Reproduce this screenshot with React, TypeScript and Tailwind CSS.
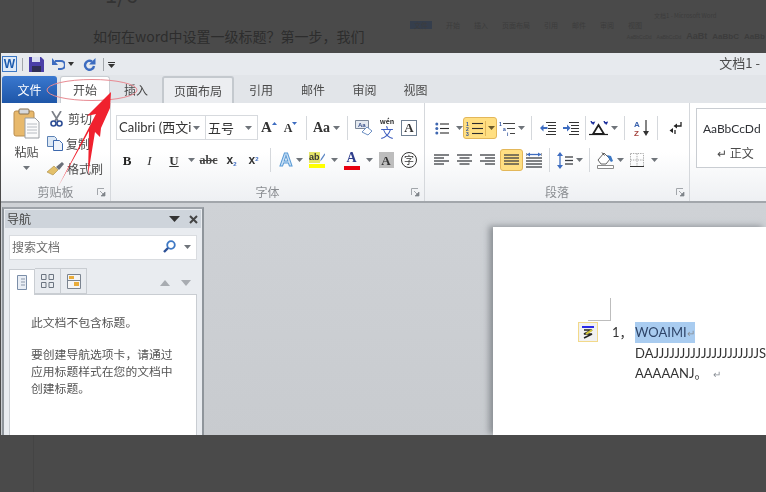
import type { ReactNode } from 'react'

const Caret = ({ className = 'text-[#6f747a]' }: { className?: string }) => (
  <svg width="7" height="4" viewBox="0 0 7 4" className={className}>
    <path d="M0 0h7L3.5 4z" fill="currentColor" />
  </svg>
)

const Sep = () => <div className="mx-auto h-[24px] w-px bg-[#d5d8dc]" />

const Slot = ({ w, children }: { w: number; children?: ReactNode }) => (
  <div className="flex shrink-0 items-center justify-center gap-[3px]" style={{ width: w }}>
    {children}
  </div>
)

const Launcher = () => (
  <svg width="9" height="9" viewBox="0 0 9 9">
    <path d="M0.5 7V0.5H7" fill="none" stroke="#a2a6ab" />
    <path d="M3 3l4 4M8 4v4H4z" fill="#7f8489" stroke="#7f8489" strokeWidth="0.7" />
  </svg>
)

const GroupLabel = ({ children }: { children: string }) => (
  <div className="grid h-[18px] shrink-0 grid-cols-[1fr_auto_1fr] items-center px-[4px] text-[12px] text-[#8a8d91]">
    <span />
    <span>{children}</span>
    <span className="flex justify-end">
      <Launcher />
    </span>
  </div>
)

const Lines = ({ kind }: { kind: 'left' | 'center' | 'right' | 'full' }) => {
  const rows = {
    left: ['M0 1h15', 'M0 4h10', 'M0 7h15', 'M0 10h10'],
    center: ['M0 1h15', 'M2.5 4h10', 'M0 7h15', 'M2.5 10h10'],
    right: ['M0 1h15', 'M5 4h10', 'M0 7h15', 'M5 10h10'],
    full: ['M0 1h15', 'M0 4h15', 'M0 7h15', 'M0 10h15'],
  }[kind]
  return (
    <svg width="15" height="12" viewBox="0 0 15 12">
      {rows.map((d) => (
        <path key={d} d={d} stroke="#3c3f43" strokeWidth="1.3" />
      ))}
    </svg>
  )
}

const Bullets = () => (
  <svg width="14" height="13" viewBox="0 0 14 13">
    {[2, 6.5, 11].map((y) => (
      <g key={y}>
        <circle cx="1.8" cy={y} r="1.5" fill="#3f67b0" />
        <path d={`M5 ${y}h9`} stroke="#2d2d2d" strokeWidth="1.1" />
      </g>
    ))}
  </svg>
)

const Numbered = () => (
  <svg width="17" height="15" viewBox="0 0 17 15">
    {[2.5, 7.5, 12.5].map((y, i) => (
      <g key={y}>
        <text x="0" y={y + 2} fontSize="5" fontWeight="700" fill="#2c4f9c" fontFamily="Liberation Sans">
          {i + 1}
        </text>
        <path d={`M6 ${y}h11`} stroke="#2d2d2d" strokeWidth="1.1" />
      </g>
    ))}
  </svg>
)

const MultiLevel = () => (
  <svg width="16" height="15" viewBox="0 0 16 15">
    <text x="0" y="5" fontSize="5" fontWeight="700" fill="#2c4f9c" fontFamily="Liberation Sans">1</text>
    <text x="4" y="10" fontSize="5" fontWeight="700" fill="#2c4f9c" fontFamily="Liberation Sans">a</text>
    <text x="8" y="15" fontSize="5" fontWeight="700" fill="#2c4f9c" fontFamily="Liberation Sans">i</text>
    <path d="M4 2.5h12M8 7.5h8M11 12.5h5" stroke="#444" strokeWidth="1" />
  </svg>
)

const Indent = ({ flip }: { flip?: boolean }) => (
  <svg width="16" height="15" viewBox="0 0 16 15">
    <path d="M6 2h10M8 5h8M8 8h8M8 11h8M6 14h10" stroke="#333" strokeWidth="1.1" transform="translate(0 -0.5)" />
    {flip ? (
      <path d="M0 6h4V3.5L7.5 7 4 10.5V8H0z" fill="#3d6cc0" />
    ) : (
      <path d="M7.5 6h-4V3.5L0 7l3.5 3.5V8h4z" fill="#3d6cc0" />
    )}
  </svg>
)

const Mixed = () => (
  <svg width="19" height="15" viewBox="0 0 19 15">
    <path d="M9.5 4L4 13h11z" fill="none" stroke="#1f1f1f" strokeWidth="1.8" />
    <path d="M0 13.5h19" stroke="#1f1f1f" strokeWidth="1.2" />
    <path d="M2 0l1 2 2-.5-1 2M15 0l1 2 2-.5-1 2" stroke="#1c2f9c" strokeWidth="1.4" fill="none" />
  </svg>
)

const Sort = () => (
  <svg width="16" height="17" viewBox="0 0 16 17">
    <text x="0" y="7" fontSize="8" fontWeight="700" fill="#3a62ad" fontFamily="Liberation Sans">A</text>
    <text x="0" y="16" fontSize="8" fontWeight="700" fill="#a5453f" fontFamily="Liberation Sans">Z</text>
    <path d="M12 0v14" stroke="#333" strokeWidth="1.2" />
    <path d="M9 11h6l-3 5z" fill="#333" />
  </svg>
)

const Pilcrow = () => (
  <svg width="13" height="14" viewBox="0 0 13 14">
    <path d="M12 1v4H7M6 9v4" stroke="#222" strokeWidth="1.3" fill="none" />
    <path d="M8 2.5v5L4.5 5zM4 7v5L.5 9.5z" fill="#222" />
  </svg>
)

const Distribute = () => (
  <svg width="16" height="17" viewBox="0 0 16 17">
    <path d="M0 1v3M16 1v3" stroke="#444" />
    <path d="M1 2.5h14" stroke="#3d6cc0" strokeWidth="1.3" />
    <path d="M1 2.5l3-2v4zM15 2.5l-3-2v4z" fill="#3d6cc0" />
    {[6, 9, 12, 15].map((y) => (
      <path key={y} d={`M0 ${y}h16`} stroke="#3c3f43" strokeWidth="1.3" />
    ))}
  </svg>
)

const LineSpacing = () => (
  <svg width="16" height="17" viewBox="0 0 16 17">
    <path d="M3 0l3 4H0zM3 17l3-4H0z" fill="#3d6cc0" />
    <path d="M3 4v9" stroke="#3d6cc0" strokeWidth="1.3" />
    {[5, 8.5, 12].map((y) => (
      <path key={y} d={`M8 ${y}h8`} stroke="#3c3f43" strokeWidth="1.3" />
    ))}
  </svg>
)

const Shading = () => (
  <svg width="17" height="18" viewBox="0 0 17 18">
    <path d="M1 9l6-7 6 6-4 5H4z" fill="#fff" stroke="#666" />
    <path d="M5 1.5l2.5 3" stroke="#444" />
    <path d="M10 4l4 1 2 5-2 1-2-3z" fill="#3d78c4" />
    <path d="M0.5 14.5h16v3H.5z" fill="#fff" stroke="#8b8b8b" />
  </svg>
)

const Borders = () => (
  <svg width="14" height="14" viewBox="0 0 14 14">
    <path d="M.5.5h13v13H.5zM7 .5v13M.5 7h13" fill="none" stroke="#aaa" strokeDasharray="1.4 1" />
    <path d="M0 13.5h14" stroke="#333" />
  </svg>
)

const Paste = () => (
  <svg width="27" height="31" viewBox="0 0 27 31">
    <rect x="1" y="3" width="20" height="25" rx="2" fill="#e8b96c" stroke="#b98d4f" />
    <rect x="6" y="1" width="10" height="5" rx="1" fill="#d7d8da" stroke="#86714f" />
    <path d="M12 10h10l4 4v16H12z" fill="#fbfbfb" stroke="#9a9ea3" />
    <path d="M14 16h10M14 19h10M14 22h10M14 25h10" stroke="#b8bcc2" />
  </svg>
)

const Scissors = () => (
  <svg width="13" height="16" viewBox="0 0 13 16">
    <path d="M2 0l6 10M11 0L5 10" stroke="#7c8088" strokeWidth="1.7" />
    <circle cx="3.5" cy="12.5" r="2.5" fill="none" stroke="#2e4e95" strokeWidth="1.6" />
    <circle cx="9.5" cy="12.5" r="2.5" fill="none" stroke="#2e4e95" strokeWidth="1.6" />
  </svg>
)

const CopyIcon = () => (
  <svg width="16" height="15" viewBox="0 0 16 15">
    <path d="M.5.5h7l2 2v8h-9z" fill="#dce8f5" stroke="#5c82b5" />
    <path d="M6.5 4.5h6l3 3v7h-9z" fill="#eef3fa" stroke="#3c68ad" />
  </svg>
)

const Brush = () => (
  <svg width="17" height="15" viewBox="0 0 17 15">
    <path d="M0 11l7-6 4 4-5 5z" fill="#e3c06a" stroke="#a78a3f" strokeWidth="0.6" />
    <path d="M9 6l6-5 2 2-5 6z" fill="#6a6f79" />
  </svg>
)

const WenIcon = () => (
  <div className="flex h-[22px] w-[20px] flex-col items-center">
    <span className="text-[7px] font-bold leading-[8px] text-[#333]">wén</span>
    <span className="text-[13px] leading-[14px] text-[#3f5fc0]">文</span>
  </div>
)

const ClearIcon = () => (
  <svg width="18" height="16" viewBox="0 0 18 16">
    <path d="M.5.5h13v8H.5z" fill="#e4e9f0" stroke="#7b8799" />
    <text x="3" y="7" fontSize="6" fontWeight="700" fill="#39508a" fontFamily="Liberation Sans">Aa</text>
    <path d="M7 12l5-5 5 4-4 4z" fill="#fff" stroke="#6d90c4" />
  </svg>
)

const Letter = ({ children, className }: { children: ReactNode; className: string }) => (
  <span className={`font-['Liberation_Serif',serif] font-bold leading-none ${className}`}>{children}</span>
)

const Combo = ({ w, label, className = '' }: { w: number; label: string; className?: string }) => (
  <div
    className={`flex h-[25px] shrink-0 items-center justify-between overflow-hidden border border-[#d7dade] bg-white pl-[2px] pr-[5px] text-[13px] text-[#333] ${className}`}
    style={{ width: w }}
  >
    <span className="whitespace-nowrap">{label}</span>
    <Caret />
  </div>
)

const FontGroup = () => (
  <div className="flex w-[314px] shrink-0 flex-col border-r border-[#d5d8dc] pt-[12px]">
    <div className="flex h-[25px] items-center pl-[5px]">
      <Combo w={90} label="Calibri (西文i" className="font-['Lato','Noto_Sans_CJK_SC',sans-serif]" />
      <Combo w={53} label="五号" className="-ml-px" />
      <Slot w={22}>
        <Letter className="text-[15px] text-[#333]">A</Letter>
        <svg width="5" height="3" className="mb-[9px] -ml-[3px]"><path d="M0 3L2.5 0 5 3z" fill="#3d6cc0" /></svg>
      </Slot>
      <Slot w={21}>
        <Letter className="text-[12px] text-[#333]">A</Letter>
        <svg width="5" height="3" className="mb-[9px] -ml-[3px]"><path d="M0 0h5L2.500 3z" fill="#3d6cc0" /></svg>
      </Slot>
      <Slot w={10}><Sep /></Slot>
      <Slot w={31}>
        <Letter className="text-[14px] text-[#333]">Aa</Letter>
        <Caret />
      </Slot>
      <Slot w={10}><Sep /></Slot>
      <Slot w={24}><ClearIcon /></Slot>
      <Slot w={22}><WenIcon /></Slot>
      <Slot w={22}>
        <div className="flex h-[16px] w-[16px] items-center justify-center border border-[#6f7f92] bg-white">
          <Letter className="text-[13px] text-[#333]">A</Letter>
        </div>
      </Slot>
    </div>
    <div className="mt-[8px] flex h-[24px] items-center pl-[5px]">
      <Slot w={22}><Letter className="text-[13px] text-[#222]">B</Letter></Slot>
      <Slot w={23}><Letter className="text-[13px] font-normal italic text-[#333]">I</Letter></Slot>
      <Slot w={36}>
        <Letter className="ml-[6px] text-[13px] text-[#333] underline">U</Letter>
        <span className="ml-[6px]"><Caret /></span>
      </Slot>
      <Slot w={23}><Letter className="text-[12px] text-[#444] line-through">abc</Letter></Slot>
      <Slot w={23}>
        <span className="font-['Liberation_Sans',sans-serif] text-[12px] font-bold leading-none text-[#333]">x<sub className="text-[6px] text-[#3d6cc0]">2</sub></span>
      </Slot>
      <Slot w={21}>
        <span className="font-['Liberation_Sans',sans-serif] text-[12px] font-bold leading-none text-[#333]">x<sup className="text-[6px] text-[#3d6cc0]">2</sup></span>
      </Slot>
      <Slot w={12}><Sep /></Slot>
      <Slot w={30}>
        <span className="font-['Liberation_Sans',sans-serif] text-[18px] font-bold leading-none text-[#cfe3f7] [-webkit-text-stroke:1px_#5b9bd5]">A</span>
        <Caret />
      </Slot>
      <Slot w={35}>
        <div className="flex w-[16px] flex-col items-center">
          <div className="flex w-[16px] items-center">
            <span className="bg-[#e5e56a] font-['Liberation_Sans',sans-serif] text-[9px] font-bold leading-[11px] text-[#333]">ab</span>
            <svg width="6" height="9" viewBox="0 0 6 9"><path d="M0 9l1-3 4-6 1 1-4 6z" fill="#5b86c4" /></svg>
          </div>
          <span className="mt-[1px] h-[4px] w-[16px] bg-[#ffff00]" />
        </div>
        <span className="ml-[3px]"><Caret /></span>
      </Slot>
      <Slot w={34}>
        <div className="flex w-[16px] flex-col items-center">
          <Letter className="font-['Liberation_Sans',sans-serif] text-[14px] text-[#2f3e8c]">A</Letter>
          <span className="mt-[1px] h-[4px] w-[16px] bg-[#e8000f]" />
        </div>
        <span className="ml-[3px]"><Caret /></span>
      </Slot>
      <Slot w={22}>
        <div className="flex h-[16px] w-[15px] items-center justify-center bg-[#bdbdbd]">
          <Letter className="text-[13px] text-[#333]">A</Letter>
        </div>
      </Slot>
      <Slot w={24}>
        <div className="flex h-[16px] w-[16px] items-center justify-center rounded-full border border-[#333] text-[10px] leading-none text-[#333]">字</div>
      </Slot>
    </div>
    <div className="flex-1" />
    <GroupLabel>字体</GroupLabel>
  </div>
)

const ParagraphGroup = () => (
  <div className="flex w-[265px] shrink-0 flex-col border-r border-[#d5d8dc] pt-[14px]">
    <div className="flex h-[22px] items-center pl-[3px]">
      <Slot w={27}><Bullets /></Slot>
      <Slot w={8}><Caret /></Slot>
      <div className="flex h-[22px] w-[34px] shrink-0 items-center rounded-[3px] border border-[#e3b75a] bg-[#ffdf82]">
        <div className="flex w-[22px] justify-center border-r border-[#e3b75a]"><Numbered /></div>
        <div className="flex flex-1 justify-center"><Caret className="text-[#6b5a2c]" /></div>
      </div>
      <Slot w={30}><MultiLevel /><Caret /></Slot>
      <Slot w={9}><Sep /></Slot>
      <Slot w={23}><Indent /></Slot>
      <Slot w={23}><Indent flip /></Slot>
      <Slot w={6}><Sep /></Slot>
      <Slot w={30}><Mixed /><Caret /></Slot>
      <Slot w={13}><Sep /></Slot>
      <Slot w={21}><Sort /></Slot>
      <Slot w={10}><Sep /></Slot>
      <Slot w={26}><Pilcrow /></Slot>
    </div>
    <div className="mt-[10px] flex h-[22px] items-center pl-[4px]">
      <Slot w={24}><Lines kind="left" /></Slot>
      <Slot w={23}><Lines kind="center" /></Slot>
      <Slot w={23}><Lines kind="right" /></Slot>
      <div className="ml-px flex h-[22px] w-[23px] shrink-0 items-center justify-center rounded-[3px] border border-[#e3b75a] bg-[#ffdf82]">
        <Lines kind="full" />
      </div>
      <Slot w={22}><Distribute /></Slot>
      <Slot w={8}><Sep /></Slot>
      <Slot w={34}><LineSpacing /><Caret /></Slot>
      <Slot w={5}><Sep /></Slot>
      <Slot w={36}><Shading /><Caret /></Slot>
      <Slot w={32}><Borders /><span className="ml-[4px]"><Caret /></span></Slot>
    </div>
    <div className="flex-1" />
    <GroupLabel>段落</GroupLabel>
  </div>
)

const ClipboardGroup = () => (
  <div className="flex w-[110px] shrink-0 flex-col border-r border-[#d5d8dc]">
    <div className="flex flex-1">
      <div className="flex w-[48px] shrink-0 flex-col items-center pl-[3px] pt-[5px]">
        <Paste />
        <span className="mt-[5px] text-[12px] leading-[16px] text-[#4a4a4a]">粘贴</span>
        <div className="mt-[6px]"><Caret /></div>
      </div>
      <div className="flex flex-col pt-[4px] text-[12px] leading-[16px] text-[#4a4a4a]">
        <div className="flex h-[24px] items-center gap-[5px] pl-[1px]"><Scissors />剪切</div>
        <div className="flex h-[25px] items-center gap-[3px] -ml-[2px]"><CopyIcon />复制</div>
        <div className="flex h-[25px] items-center gap-[3px] -ml-[2px]"><Brush />格式刷</div>
      </div>
    </div>
    <GroupLabel>剪贴板</GroupLabel>
  </div>
)

const Ribbon = () => (
  <div className="flex h-[100px] shrink-0 border-b-2 border-[#a2a6ab] bg-gradient-to-b from-white via-white to-[#eef0f3]">
    <ClipboardGroup />
    <FontGroup />
    <ParagraphGroup />
    <div className="flex flex-1 overflow-hidden pl-[6px] pt-[5px]">
      <div className="flex h-[60px] w-[100px] shrink-0 flex-col border border-[#c9cdd2] bg-white pl-[6px] pt-[11px]">
        <span className="font-['Lato',sans-serif] text-[12px] leading-[18px] text-[#2f3136]">AaBbCcDd</span>
        <span className="mt-[7px] pl-[14px] text-[12px] leading-[16px] text-[#4a4a4a]">↵ 正文</span>
      </div>
    </div>
  </div>
)

const QuickBar = () => (
  <div className="flex h-[22px] shrink-0 items-center bg-[#e7eaee] pl-[1px]">
    <div className="flex h-[16px] w-[15px] items-center justify-center border border-[#3d78c4] bg-[#dfeaf7] font-['Liberation_Sans',sans-serif] text-[12px] font-bold leading-none text-[#1e5cae]">W</div>
    <div className="ml-[5px] h-[13px] w-px bg-[#a2a6ab]" />
    <svg width="15" height="15" viewBox="0 0 15 15" className="ml-[6px]">
      <path d="M0 0h12l3 3v12H0z" fill="#4a3fa8" />
      <path d="M3 0h8v5H3z" fill="#d8dcf0" />
      <path d="M3 9h9v6H3z" fill="#2f2f55" />
    </svg>
    <svg width="13" height="13" viewBox="0 0 13 13" className="ml-[8px]">
      <path d="M3 3h6a3.500 3.500 0 0 1 0 8H6" fill="none" stroke="#3d6cc0" strokeWidth="2.200" />
      <path d="M0 0v7h6z" fill="#3d6cc0" />
    </svg>
    <svg width="6" height="4" viewBox="0 0 6 4" className="ml-[3px]"><path d="M0 0h6L3 4z" fill="#333" /></svg>
    <svg width="13" height="13" viewBox="0 0 13 13" className="ml-[9px]">
      <path d="M9 3.500A4.500 4.500 0 1 0 11 8" fill="none" stroke="#3d6cc0" strokeWidth="2.400" />
      <path d="M12.500 0v6.500H6z" fill="#3d6cc0" />
    </svg>
    <div className="ml-[7px] h-[13px] w-px bg-[#a2a6ab]" />
    <svg width="7" height="6" viewBox="0 0 7 6" className="ml-[4px] mt-[2px]"><path d="M0 0h7v1H0zM0 2h7L3.500 6z" fill="#333" /></svg>
    <span className="ml-auto pb-[4px] pr-[6px] text-[13px] leading-none text-[#4a4a4a]">文档1 -</span>
  </div>
)

const Tab = ({ w, label, className = '' }: { w: number; label: string; className?: string }) => (
  <div className={`flex h-[27px] shrink-0 items-center justify-center text-[12px] text-[#4a4a4a] ${className}`} style={{ width: w }}>
    {label}
  </div>
)

const TabBar = () => (
  <div className="flex h-[28px] shrink-0 items-end bg-[#e2e5e9] pl-[1px]">
    <div className="flex h-[27px] w-[55px] items-center justify-center rounded-t-[3px] bg-gradient-to-b from-[#3a78cf] to-[#1e56a8] text-[12px] text-white">文件</div>
    <Tab w={50} label="开始" className="ml-[3px] rounded-t-[3px] border border-b-0 border-[#c9cdd2] bg-white" />
    <Tab w={52} label="插入" />
    <Tab w={72} label="页面布局" className="rounded-t-[3px] border-2 border-b-0 border-[#c4c9ce] bg-[#eceef1]" />
    <Tab w={54} label="引用" />
    <Tab w={50} label="邮件" />
    <Tab w={53} label="审阅" />
    <Tab w={49} label="视图" />
  </div>
)

const NavPane = () => (
  <div className="flex w-[203px] shrink-0 flex-col pl-px pt-[4px]">
    <div className="flex flex-1 flex-col border-x-2 border-t-2 border-x-[#8f959b] border-t-[#9ea3a9] bg-[#e9ecf0] px-[1px] pt-[1px]">
      <div className="flex h-[18px] shrink-0 items-center justify-between bg-[#ced4db] pl-[2px] pr-[3px] text-[12px] text-[#444]">
        导航
        <div className="flex items-center gap-[9px]">
          <svg width="11" height="6" viewBox="0 0 11 6"><path d="M0 0h11L5.500 6z" fill="#333" /></svg>
          <svg width="9" height="9" viewBox="0 0 9 9"><path d="M1 1l7 7M8 1L1 8" stroke="#444" strokeWidth="2" /></svg>
        </div>
      </div>
      <div className="mx-[4px] mt-[7px] flex h-[25px] shrink-0 items-center justify-between border border-[#d9dce0] bg-white pb-[2px] pl-[2px] pr-[5px] text-[12px] text-[#6d6d6d]">
        搜索文档
        <div className="flex items-center gap-[8px]">
          <svg width="13" height="14" viewBox="0 0 13 14">
            <circle cx="8" cy="5" r="3.800" fill="none" stroke="#3d78c4" strokeWidth="1.800" />
            <path d="M5 8l-4 4" stroke="#2b4f95" strokeWidth="2.400" />
          </svg>
          <Caret />
        </div>
      </div>
      <div className="mx-[4px] mt-[8px] flex h-[26px] shrink-0 items-end">
        <div className="z-10 -mb-px flex h-[26px] w-[26px] items-center justify-center border border-b-0 border-[#c9cdd2] bg-white">
          <svg width="10" height="15" viewBox="0 0 10 15"><path d="M.5.500h9v14h-9z" fill="#e9eef5" stroke="#7b8ea8" /><path d="M4 4h4M4 7h4M4 10h4" stroke="#8b97a8" /></svg>
        </div>
        <div className="flex h-[26px] w-[26px] items-center justify-center border-y border-r border-[#c9cdd2]">
          <svg width="13" height="14" viewBox="0 0 13 14" fill="none" stroke="#6b7480"><path d="M.5.500h4.500v5H.5zM8 .500h4.500v5H8zM.5 8.500h4.500v5H.5zM8 8.500h4.500v5H8z" /></svg>
        </div>
        <div className="flex h-[26px] w-[26px] items-center justify-center border-y border-r border-[#c9cdd2]">
          <svg width="14" height="15" viewBox="0 0 14 15"><path d="M.5.500h13v14H.5z" fill="#f5f5f5" stroke="#7b8490" /><path d="M2 2h5v3H2zM7 8h5v4H7z" fill="#e9ac3a" /><path d="M1 6.500h12" stroke="#7b8490" /></svg>
        </div>
        <div className="ml-auto mb-[8px] flex items-center gap-[11px] pr-[6px]">
          <svg width="10" height="6" viewBox="0 0 10 6"><path d="M0 6L5 0l5 6z" fill="#a8acb1" /></svg>
          <svg width="10" height="6" viewBox="0 0 10 6"><path d="M0 0h10L5 6z" fill="#a8acb1" /></svg>
        </div>
      </div>
      <div className="mx-[4px] flex-1 overflow-hidden border border-b-0 border-[#c9cdd2] bg-white pl-[21px] pt-[18px] text-[11.800px] leading-[17px] text-[#555]">
        <p>此文档不包含标题。</p>
        <p className="mt-[15px] whitespace-nowrap">
          要创建导航选项卡&#xFF0C;请通过
          <br />
          应用标题样式在您的文档中
          <br />
          创建标题。
        </p>
      </div>
    </div>
  </div>
)

const Page = () => (
  <div className="ml-[289px] mt-[24px] flex-1 overflow-hidden bg-white pl-[85px] pt-[71px] font-['Lato','Noto_Sans_CJK_SC',sans-serif] shadow-[-4px_-1px_6px_rgba(90,95,100,0.55)]">
    <div className="ml-[10px] h-[23px] w-[23px] border-b border-r border-[#bdbdbd]" />
    <div className="mt-px flex items-start">
      <div className="flex h-[20px] w-[20px] shrink-0 items-center justify-center border border-[#f2d98a] bg-[#f1f1f1]">
        <svg width="14" height="14" viewBox="0 0 14 14">
          <path d="M1 1h12v2H1z" fill="#2a2ae8" />
          <path d="M3 5h8L3 9h8l-8 4" fill="none" stroke="#222" strokeWidth="1.400" />
          <path d="M5 9l6-4" stroke="#d8c93a" strokeWidth="2" />
        </svg>
      </div>
      <span className="ml-[14px] w-[23px] shrink-0 whitespace-nowrap text-[13px] leading-[21px] text-[#333]">1&#xFF0C;</span>
      <div className="whitespace-nowrap text-[13px] leading-[20px] text-[#333]">
        <div className="w-[60px] bg-[#a9ccf0] text-[#2e4468]">WOAIMI<span className="text-[10px] text-[#8a8f96]">↵</span></div>
        <div>DAJJJJJJJJJJJJJJJJJJJJSJ</div>
        <div>AAAAANJ。<span className="ml-[6px] text-[10px] text-[#8a8f96]">↵</span></div>
      </div>
    </div>
  </div>
)

const Backdrop = () => (
  <div className="flex h-[53px] shrink-0 overflow-hidden">
    <div className="ml-[33px] w-px bg-[#444]" />
    <div className="ml-[59px] shrink-0 whitespace-nowrap text-[14px] leading-[18px] text-[#2d2d2d]">
      <div className="-mt-[17px] h-[20px] pl-[12px] text-[22px] leading-[20px] text-[#333]">1/6</div>
      <div className="mt-[24px]">如何在word中设置一级标题&#xFF1F;第一步&#xFF0C;我们</div>
    </div>
    <div className="ml-auto w-[356px] shrink-0 pt-[12px] text-[#3c3c3c]">
      <div className="pl-[244px] text-[6px] leading-[8px]">文档1 - Microsoft Word</div>
      <div className="mt-px flex gap-[14px] text-[7px] leading-[8px]">
        <span className="bg-[#353e4c] px-[4px]">文件</span><span>开始</span><span>插入</span><span>页面布局</span><span>引用</span><span>邮件</span><span>审阅</span><span>视图</span>
      </div>
      <div className="mt-[3px] flex items-baseline justify-end gap-[5px] font-['Liberation_Sans',sans-serif] text-[5px] leading-[9px]">
        <span>AaBbCcDd</span><span>AaBbCcDd</span><span className="text-[9px] font-bold">AaBt</span><span className="text-[8px] font-bold">AaBbC</span><span className="w-[22px] overflow-hidden text-[8px] font-bold">AaBb</span>
      </div>
    </div>
  </div>
)

const Annotation = () => (
  <svg width="766" height="492" viewBox="0 0 766 492" className="pointer-events-none absolute left-0 top-0">
    <ellipse cx="92" cy="90" rx="45" ry="10.500" fill="none" stroke="#e88a92" strokeWidth="1" />
    <path d="M111 92L87 116L96 114L58 187L89 131L88 175L95 132L100 137L101 128L110 108z" fill="#f0212e" />
  </svg>
)

export default function App() {
  return (
    <div className="relative flex h-[492px] w-[766px] flex-col overflow-hidden bg-[#4a4a4a] font-['Noto_Sans_CJK_SC','Noto_Sans',sans-serif]">
      <Backdrop />
      <div className="ml-px flex h-[382px] shrink-0 flex-col overflow-hidden blur-[0.5px]">
        <QuickBar />
        <TabBar />
        <Ribbon />
        <div className="flex min-h-0 flex-1 bg-gradient-to-b from-[#cfd2d6] to-[#c8cbcf]">
          <NavPane />
          <Page />
        </div>
      </div>
      <div className="flex-1">
        <div className="ml-[33px] h-full w-px bg-[#444]" />
      </div>
      <Annotation />
    </div>
  )
}
